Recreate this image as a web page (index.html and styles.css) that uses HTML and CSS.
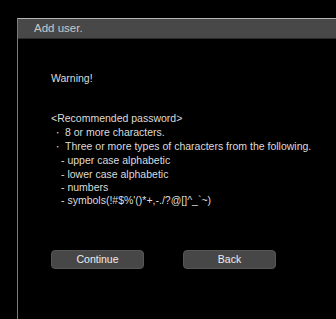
FILE: index.html
```html
<!DOCTYPE html>
<html lang="en">
<head>
    <meta charset="UTF-8">
    <meta name="viewport" content="width=device-width, initial-scale=1.0">
    <title>Add user</title>
    <link rel="stylesheet" href="styles.css">
</head>
<body>
    <div class="panel">
        <div class="panel-head">Add user.</div>
        <div class="panel-body">
            <p class="warning">Warning!</p>
            <div class="rules">
                <p>&lt;Recommended password&gt;</p>
                <p class="item"><span class="dot">・</span>8 or more characters.</p>
                <p class="item"><span class="dot">・</span>Three or more types of characters from the following.</p>
                <p class="sub">- upper case alphabetic</p>
                <p class="sub">- lower case alphabetic</p>
                <p class="sub">- numbers</p>
                <p class="sub">- symbols(!#$%'()*+,-./?@[]^_`~)</p>
            </div>
            <div class="buttons">
                <button class="btn">Continue</button>
                <button class="btn">Back</button>
            </div>
        </div>
    </div>
</body>
</html>
```

FILE: styles.css
```css
* {
    margin: 0;
    padding: 0;
    box-sizing: border-box;
}

body {
    background-color: #000;
    font-family: "Liberation Sans", Arial, sans-serif;
    font-size: 10.5px;
    color: #dcdcdc;
    height: 319px;
    overflow: hidden;
}

.panel {
    margin: 18px 0 0 17px;
    border-top: 1px solid #b4b4b4;
    border-left: 1px solid #7a7a7a;
    height: 301px;
}

.panel-head {
    height: 20px;
    background-color: #484848;
    border-bottom: 1px solid #2a2a2a;
    padding-left: 16px;
    font-size: 11.5px;
    line-height: 18px;
    color: #c8c8c8;
}

.panel-body {
    padding: 0 0 0 33px;
    line-height: 13.33px;
}

.warning {
    margin-top: 33px;
}

.rules {
    margin-top: 27px;
}

.item {
    padding-left: 2px;
}

.dot {
    display: inline-block;
    width: 12px;
    font-size: 9px;
}

.sub {
    padding-left: 10px;
}

.buttons {
    display: flex;
    gap: 39px;
    margin-top: 42px;
}

.btn {
    width: 93px;
    height: 19px;
    background-color: #474747;
    border: 1px solid #565656;
    border-radius: 4px;
    color: #eee;
    font-family: "Liberation Sans", Arial, sans-serif;
    font-size: 10.5px;
}
```
